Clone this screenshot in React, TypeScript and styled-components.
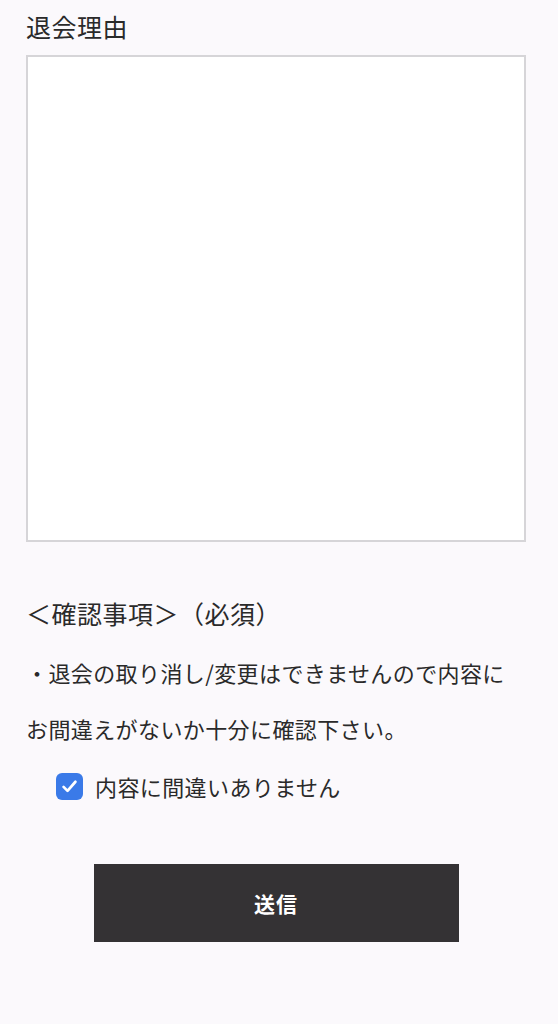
import styled, { createGlobalStyle } from "styled-components"

const GlobalStyle = createGlobalStyle`
  html, body {
    margin: 0;
    padding: 0;
    background: #fbf9fc;
  }
  body {
    font-family: "Noto Sans CJK JP", "Noto Sans", sans-serif;
    color: #2a2a2a;
  }
`

const Page = styled.main`
  padding: 7px 32px 80px 26px;
  display: flex;
  flex-direction: column;
`

const Label = styled.h2`
  margin: 0;
  font-size: 25px;
  font-weight: 400;
  line-height: 38px;
  letter-spacing: 0.5px;
`

const Reason = styled.textarea`
  margin-top: 10px;
  width: 100%;
  height: 487px;
  box-sizing: border-box;
  border: 2px solid #d6d5d8;
  background: #fff;
  resize: none;
  outline: none;
  font: inherit;
`

const Heading = styled(Label)`
  margin-top: 52px;
`

const Notice = styled.p`
  margin: 12px 0 0;
  font-size: 22px;
  line-height: 56px;
  letter-spacing: 0.4px;
`

const CheckRow = styled.label`
  margin: 8px 0 0 30px;
  display: flex;
  align-items: center;
  gap: 12px;
  font-size: 22px;
  line-height: 44px;
  letter-spacing: 0.4px;
  cursor: pointer;
`

const Box = styled.span`
  width: 27px;
  height: 27px;
  border-radius: 6px;
  background: #3a7ae8;
  display: flex;
  align-items: center;
  justify-content: center;
`

const Submit = styled.button`
  margin: 56px auto 0;
  width: 365px;
  height: 78px;
  border: none;
  background: #343234;
  color: #fff;
  font-family: inherit;
  font-size: 21px;
  font-weight: 700;
  letter-spacing: 1px;
  cursor: pointer;
`

export default function App() {
  return (
    <>
      <GlobalStyle />
      <Page>
        <Label>退会理由</Label>
        <Reason />
        <Heading>＜確認事項＞（必須）</Heading>
        <Notice>
          ・退会の取り消し/変更はできませんので内容に
          <br />
          お間違えがないか十分に確認下さい。
        </Notice>
        <CheckRow>
          <Box>
            <svg width="19" height="19" viewBox="0 0 24 24" fill="none">
              <path d="M4.5 12.5l5 5L19.5 6" stroke="#fff" strokeWidth="3.4" strokeLinecap="round" strokeLinejoin="round" />
            </svg>
          </Box>
          内容に間違いありません
        </CheckRow>
        <Submit>送信</Submit>
      </Page>
    </>
  )
}
